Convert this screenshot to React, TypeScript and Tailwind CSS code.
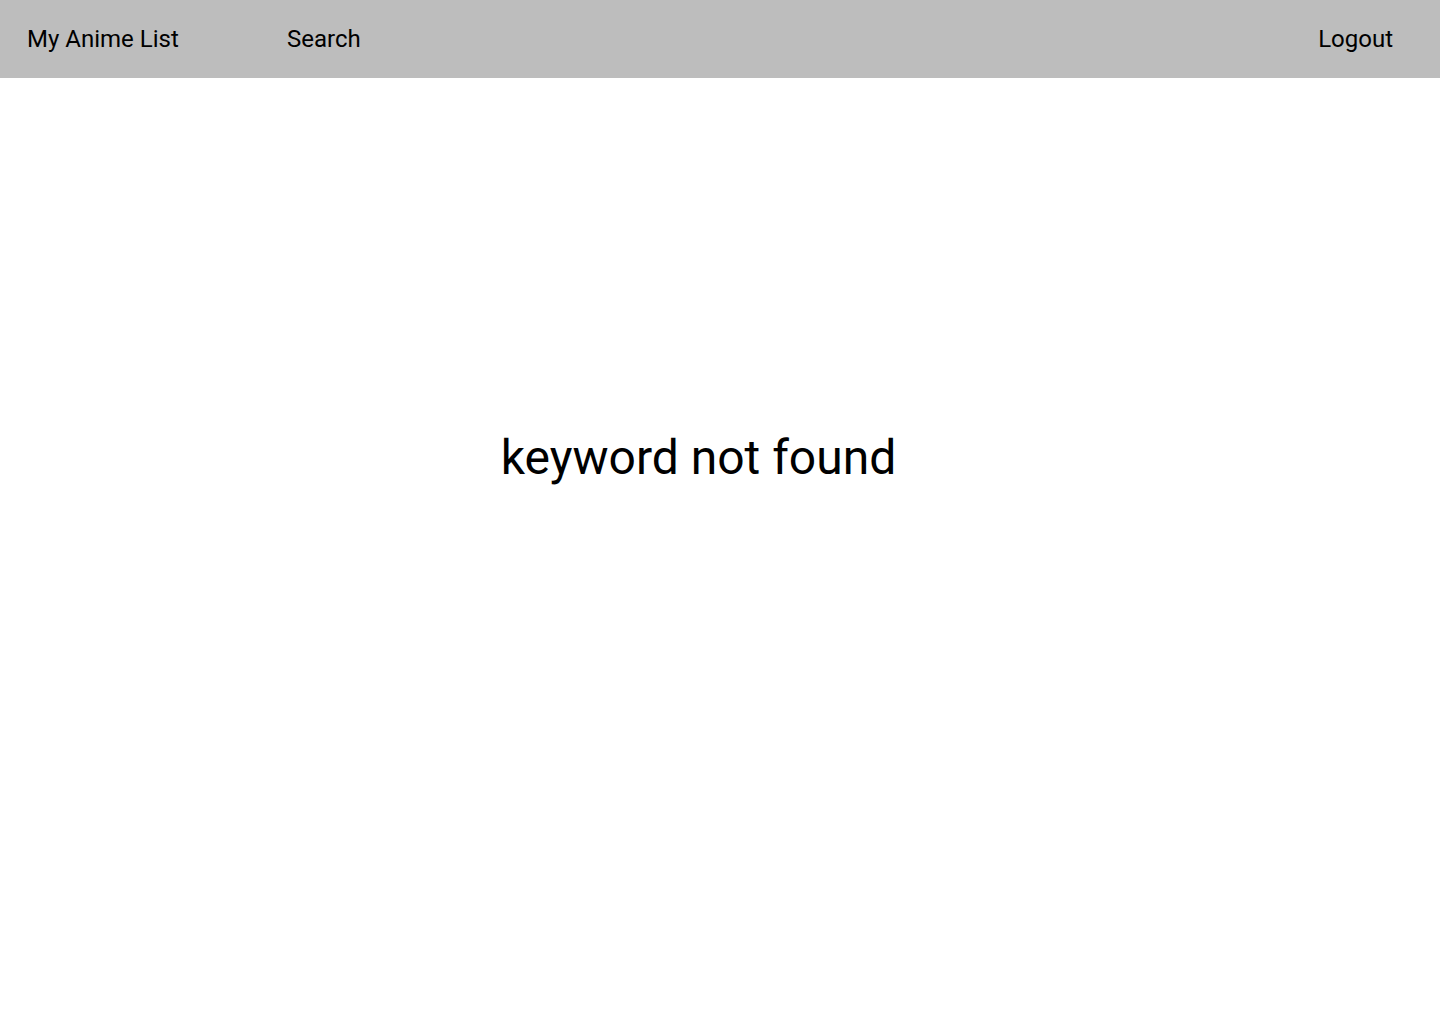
export default function App() {
  return (
    <div className="min-h-[1024px] bg-white text-black" style={{ fontFamily: 'Roboto, "Noto Sans", sans-serif' }}>
      <header className="flex h-[78px] items-center bg-[#bdbdbd] pl-[27px] pr-[47px] text-[24px] leading-none">
        <span className="w-[260px]">My Anime List</span>
        <span>Search</span>
        <span className="ml-auto">Logout</span>
      </header>
      <main className="flex justify-center pt-[352px] pr-[43px]">
        <p className="text-[48px] leading-[56px]">keyword not found</p>
      </main>
    </div>
  );
}
